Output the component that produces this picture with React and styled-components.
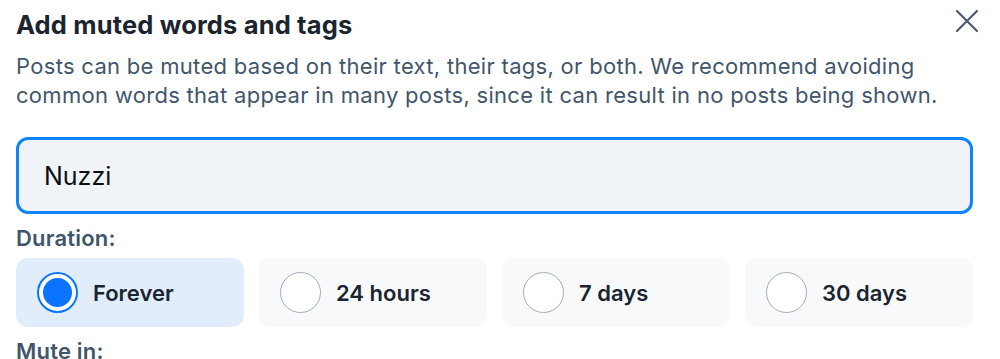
import React, { useState } from 'react';
import styled, { createGlobalStyle } from 'styled-components';

const GlobalStyle = createGlobalStyle`
    body {
        margin: 0;
        background: #ffffff;
        font-family: Inter, "Noto Sans", sans-serif;
    }
`;

const Dialog = styled.main`
    padding: 6px 27px 0 16px;
    display: flex;
    flex-direction: column;
`;

const Header = styled.header`
    display: flex;
    justify-content: space-between;
    align-items: flex-start;
`;

const Title = styled.h1`
    margin: 3px 0 0;
    font-size: 25.5px;
    line-height: 32px;
    font-weight: 700;
    letter-spacing: 0.15px;
    color: #1b2530;
`;

const CloseButton = styled.button`
    border: 0;
    background: none;
    padding: 0;
    margin: 1px -8px 0 0;
    width: 28px;
    height: 28px;
    display: flex;
    align-items: center;
    justify-content: center;
    color: #4b5a6e;
    cursor: pointer;
`;

const Description = styled.p`
    margin: 11px 0 0;
    font-size: 22px;
    line-height: 29px;
    letter-spacing: 0.3px;
    color: #42566b;
`;

const Input = styled.input`
    margin-top: 27px;
    box-sizing: border-box;
    width: 100%;
    height: 77px;
    border: 3px solid #1083fe;
    border-radius: 12px;
    background: #f0f3f7;
    padding: 0 25px;
    font-family: Inter, "Noto Sans", sans-serif;
    font-size: 25px;
    color: #0b0f14;
    outline: none;
`;

const SectionLabel = styled.div`
    margin-top: 11px;
    font-size: 22px;
    line-height: 26px;
    font-weight: 600;
    letter-spacing: 0.2px;
    color: #42566b;
`;

const OptionGrid = styled.div`
    margin-top: 7px;
    display: grid;
    grid-template-columns: repeat(4, 1fr);
    gap: 15px;
`;

const Option = styled.label`
    height: 69px;
    box-sizing: border-box;
    border-radius: 12px;
    background: ${p => (p.$selected ? '#e2edfb' : '#f7f9fb')};
    display: flex;
    align-items: center;
    gap: 15px;
    padding-left: 21px;
    cursor: pointer;
`;

const Radio = styled.span`
    width: 41px;
    height: 41px;
    box-sizing: border-box;
    border-radius: 50%;
    border: ${p => (p.$selected ? '2px solid #0a74fe' : '1.5px solid #a3acb8')};
    background: #ffffff;
    display: flex;
    align-items: center;
    justify-content: center;

    &::after {
        content: '';
        display: ${p => (p.$selected ? 'block' : 'none')};
        width: 29px;
        height: 29px;
        border-radius: 50%;
        background: #0a74fe;
    }
`;

const OptionText = styled.span`
    font-size: 22px;
    font-weight: 600;
    color: #1b2530;
`;

const durations = ['Forever', '24 hours', '7 days', '30 days'];

function App() {
    const [word, setWord] = useState('Nuzzi');
    const [duration, setDuration] = useState('Forever');

    return (
        <>
            <GlobalStyle />
            <Dialog>
                <Header>
                    <Title>Add muted words and tags</Title>
                    <CloseButton aria-label="Close">
                        <svg width="24" height="24" viewBox="0 0 24 24" fill="none" stroke="currentColor" strokeWidth="2.2" strokeLinecap="round">
                            <path d="M2 2 L22 22 M22 2 L2 22" />
                        </svg>
                    </CloseButton>
                </Header>
                <Description>
                    Posts can be muted based on their text, their tags, or both. We recommend avoiding
                    common words that appear in many posts, since it can result in no posts being shown.
                </Description>
                <Input value={word} onChange={e => setWord(e.target.value)} />
                <SectionLabel>Duration:</SectionLabel>
                <OptionGrid>
                    {durations.map(d => (
                        <Option key={d} $selected={d === duration} onClick={() => setDuration(d)}>
                            <Radio $selected={d === duration} />
                            <OptionText>{d}</OptionText>
                        </Option>
                    ))}
                </OptionGrid>
                <SectionLabel>Mute in:</SectionLabel>
            </Dialog>
        </>
    );
}

export default App;
